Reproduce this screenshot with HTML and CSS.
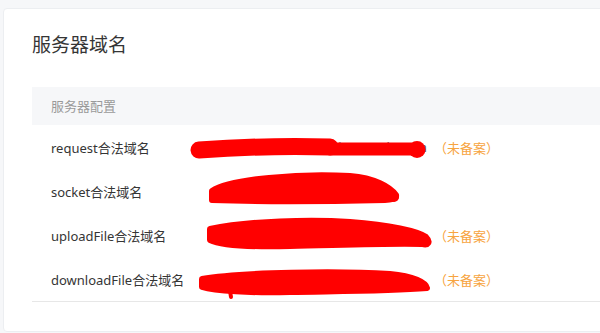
FILE: index.html
```html
<!DOCTYPE html>
<html lang="zh-CN">
<head>
<meta charset="utf-8">
<title>服务器域名</title>
<link rel="stylesheet" href="styles.css">
</head>
<body>
<div class="page">
  <section class="card">
    <h2 class="card-title">服务器域名</h2>
    <div class="table">
      <div class="thead">服务器配置</div>
      <div class="row">
        <div class="label">request合法域名</div>
        <div class="value">
          <span class="domain domain-right">api.example.com</span>
          <svg class="scribble" width="250" height="44" viewBox="0 0 250 44">
            <path d="M9 25 C 50 22, 100 21, 140 22" stroke="#ff0000" stroke-width="17" fill="none" stroke-linecap="round"/>
            <path d="M140 24 C 170 24, 200 24, 222 24" stroke="#ff0000" stroke-width="13" fill="none" stroke-linecap="round"/>
            <circle cx="227" cy="24.5" r="8.5" fill="#ff0000"/>
          </svg>
          <span class="tag">（未备案）</span>
        </div>
      </div>
      <div class="row">
        <div class="label">socket合法域名</div>
        <div class="value">
          <span class="domain">wss://ws.example.com</span>
          <svg class="scribble" width="250" height="44" viewBox="0 0 250 44">
            <path d="M22 22 C 40 10, 110 4, 160 7 C 185 9, 200 18, 206 26 C 207 30, 200 31, 195 31 C 150 32, 80 33, 22 31 Z" fill="#ff0000" stroke="#ff0000" stroke-width="6" stroke-linejoin="round"/>
            <circle cx="204" cy="28" r="5" fill="#ff0000"/>
          </svg>
        </div>
      </div>
      <div class="row">
        <div class="label">uploadFile合法域名</div>
        <div class="value">
          <span class="domain">https://up.example.com</span>
          <svg class="scribble" width="250" height="44" viewBox="0 0 250 44">
            <path d="M20 16 C 60 8, 120 6, 160 9 C 200 12, 228 18, 236 24 C 241 29, 238 33, 232 31 C 200 30, 150 32, 100 33 C 60 34, 30 32, 20 27 Z" fill="#ff0000" stroke="#ff0000" stroke-width="6" stroke-linejoin="round"/>
          </svg>
          <span class="tag">（未备案）</span>
        </div>
      </div>
      <div class="row">
        <div class="label">downloadFile合法域名</div>
        <div class="value">
          <span class="domain">https://dl.example.com</span>
          <svg class="scribble" width="250" height="44" viewBox="0 0 250 44">
            <path d="M12 22 C 50 15, 150 14, 200 17 C 224 19, 236 26, 237 31 C 200 34, 150 34, 100 35 C 60 36, 25 34, 12 30 Z" fill="#ff0000" stroke="#ff0000" stroke-width="6" stroke-linejoin="round"/>
            <path d="M40 34 L 41 40" stroke="#ff0000" stroke-width="4" stroke-linecap="round"/>
          </svg>
          <span class="tag">（未备案）</span>
        </div>
      </div>
    </div>
  </section>
</div>
</body>
</html>
```

FILE: styles.css
```css
html, body {
  margin: 0;
  padding: 0;
  overflow: hidden;
  background: #f6f7f9;
  font-family: "Noto Sans", "Noto Sans CJK SC", sans-serif;
  color: #353535;
}

.page {
  padding: 8px 0 0 3px;
}

.card {
  width: 660px;
  background: #ffffff;
  border: 1px solid #eceef1;
  border-radius: 4px;
  padding: 23px 0 29px 28px;
  box-sizing: border-box;
}

.card-title {
  margin: 0;
  font-size: 19px;
  font-weight: normal;
  line-height: 26px;
  color: #353535;
}

.table {
  margin-top: 29px;
  border-bottom: 1px solid #e7e7e7;
}

.thead {
  height: 38px;
  line-height: 38px;
  background: #f6f7f9;
  padding-left: 19px;
  font-size: 13px;
  color: #9a9a9a;
}

.row {
  display: flex;
  align-items: center;
  height: 44px;
  padding-left: 19px;
  font-size: 13px;
}

.label {
  width: 139px;
  flex: none;
  color: #353535;
}

.value {
  position: relative;
  display: flex;
  align-items: center;
  height: 44px;
}

.domain {
  display: inline-block;
  width: 244px;
  box-sizing: border-box;
  padding-left: 40px;
  color: #555555;
  white-space: nowrap;
}

.domain-right {
  text-align: right;
  padding-left: 0;
  padding-right: 7px;
}

.scribble {
  position: absolute;
  left: 0;
  top: 0;
}

.tag {
  color: #f7a440;
  white-space: nowrap;
}
```
